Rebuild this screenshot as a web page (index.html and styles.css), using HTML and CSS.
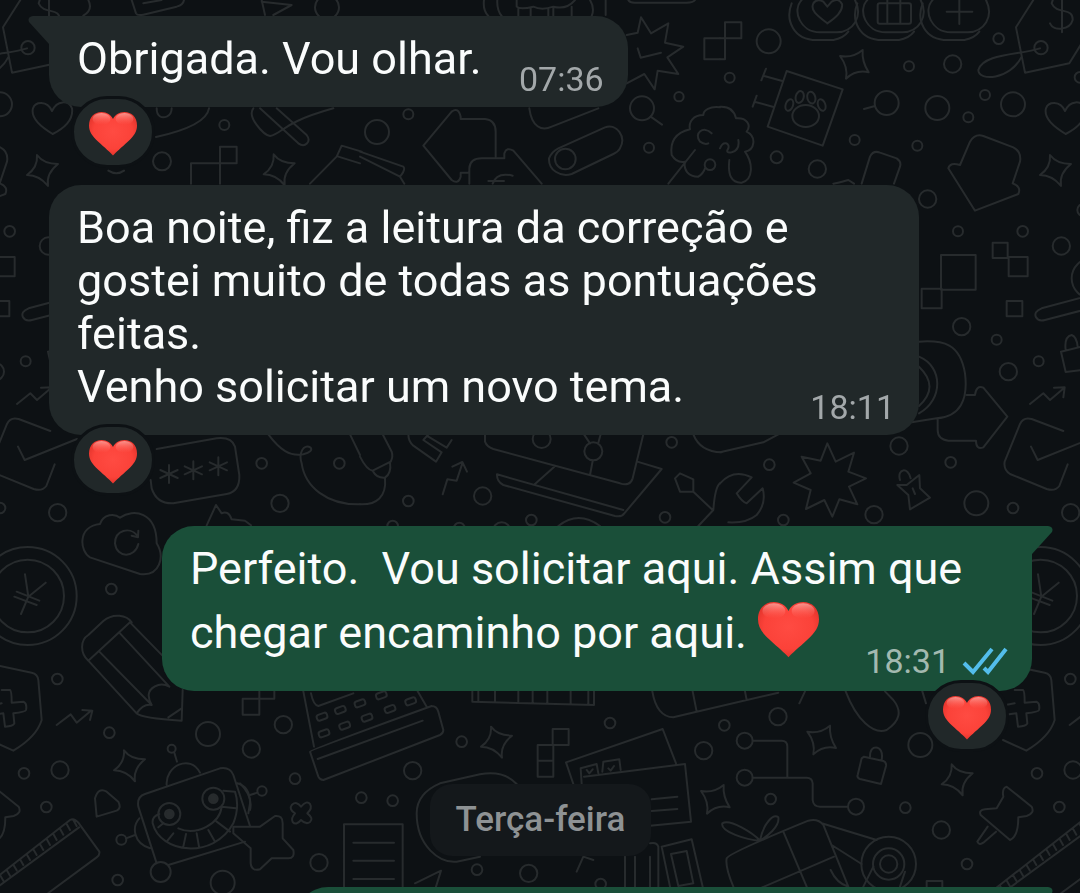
FILE: index.html
```html
<!DOCTYPE html>
<html lang="pt-BR">
<head>
<meta charset="utf-8">
<meta name="viewport" content="width=device-width, initial-scale=1">
<title>Conversa</title>
<link rel="stylesheet" href="styles.css">
</head>
<body>
<svg class="defs" aria-hidden="true">
  <defs>
    <radialGradient id="heart-fill" cx="50%" cy="45%" r="62%">
      <stop offset="0" stop-color="#ff4b42"/>
      <stop offset="0.65" stop-color="#fb4239"/>
      <stop offset="1" stop-color="#dc2f27"/>
    </radialGradient>
    <linearGradient id="heart-shine" x1="0" y1="0" x2="0" y2="1">
      <stop offset="0" stop-color="#ffd0cb" stop-opacity="0.6"/>
      <stop offset="1" stop-color="#ff6a60" stop-opacity="0"/>
    </linearGradient>
    <symbol id="heart" viewBox="0 0 48 44">
      <path fill="url(#heart-fill)" d="M24 43.500C21 40 16 36 9 29.500C3 24 0 19.500 0 13.500C0 5 5.500 0 12.500 0C18 0 22 3 24 7C26 3 30 0 35.500 0C42.500 0 48 5 48 13.500C48 19.500 45 24 39 29.500C32 36 27 40 24 43.500Z"/>
      <ellipse fill="url(#heart-shine)" cx="12.500" cy="7" rx="9" ry="6"/>
      <ellipse fill="url(#heart-shine)" cx="35.500" cy="7" rx="9" ry="6"/>
    </symbol>
    <symbol id="tail" viewBox="0 0 21 28">
      <path d="M0 0H16Q22 1 20 6L0 28Z" fill="currentColor"/>
    </symbol>
    <path id="spark" d="M-15 -45Q5 -18 48 -18Q12 10 18 48Q-8 15 -45 15Q-12 -8 -15 -45Z"/>
    <path id="spark-b" d="M25 -43Q22 -8 43 24Q5 15 -25 43Q-18 8 -43 -25Q-5 -18 25 -43Z"/>
    <path id="aster" d="M0 -27V27M-26 -12L26 12M-26 12L26 -12"/>
    <rect id="key" x="-16" y="-9" width="32" height="18" rx="7" transform="rotate(-20)"/>
    <g id="coin"><path d="M245 0C215 30 240 97 300 97H350C400 95 430 50 405 0M215 10C195 60 220 120 290 120H340Q370 115 385 95"/></g>
  </defs>
</svg>

<svg class="wallpaper" viewBox="0 0 1080 893" preserveAspectRatio="xMinYMin slice" aria-hidden="true">
  <g id="tile">
    <g transform="scale(.33333)">
      <circle cx="673" cy="375" r="15"/><circle cx="486" cy="484" r="27"/><circle cx="981" cy="22" r="36"/>
      <use href="#spark" x="836" y="508"/>
      <path d="M468 411C540 395 620 370 627 325M470 325C470 350 485 355 500 350C512 345 515 335 515 325M760 325C740 350 790 405 810 408C850 400 840 370 1000 325M780 325L895 430C915 445 935 425 920 405L830 325M573 551V490H660V440H710V490H660V551M930 551L1010 470L1025 437L1085 455M1015 470L1080 490M395 0L408 40Q412 48 430 44L530 20Q550 14 552 0M430 10L485 0M785 0L795 45M785 5L875 15L820 45M265 0Q280 30 250 47M325 512Q350 528 372 512"/>
    </g>
    <g transform="translate(360 0) scale(.33333)">
      <circle cx="145" cy="343" r="15"/><circle cx="51" cy="396" r="36"/><circle cx="616" cy="477" r="31"/><circle cx="846" cy="325" r="36"/><circle cx="957" cy="290" r="14"/><circle cx="867" cy="443" r="15"/><circle cx="1050" cy="494" r="16"/>
      <path d="M872 350L906 374M372 0Q368 30 385 48M412 0Q410 30 425 48M470 0V20Q480 30 520 20Q545 32 580 20Q620 30 645 0M475 25V48M512 25V48M565 25V48M580 25V48M635 20V48M690 0Q705 25 695 48M737 0V45M805 0Q810 10 830 8H980Q1000 8 1005 0"/>
      <path d="M800 105L833 98L843 52L873 100L925 70L915 128L970 140L922 172L955 222L893 212L884 268L853 222L800 250M833 145L842 173L903 158M1080 115H1033V178H1080"/>
      <path d="M508 325C515 380 545 395 575 380L715 325M595 445L735 382C770 370 800 410 780 445Q775 455 760 462L635 522C600 532 565 510 567 475Q575 455 595 445ZM325 518H302V530Q295 555 275 540L190 437L275 335Q295 320 302 350V357H375Q407 360 407 395V470M328 551V505Q330 475 365 475H433V460Q440 440 460 452L545 551M385 543H432M398 551Q410 515 458 527M0 470L120 530L133 551M0 455L130 500Q138 508 120 530"/>
      <path d="M1080 322C1050 318 1030 330 1030 345C1000 345 985 365 990 388C940 400 930 430 935 465Q950 490 975 485C970 510 985 530 1015 530Q1030 520 1035 505M1055 400C1030 375 1000 400 1020 425Q1035 435 1045 430M925 551L1005 450"/>
    </g>
    <g transform="translate(720 0) scale(.33333)">
      <circle cx="146" cy="124" r="36"/><circle cx="29" cy="233" r="15"/><circle cx="567" cy="199" r="15"/><circle cx="698" cy="192" r="26"/><circle cx="836" cy="116" r="16"/><circle cx="963" cy="143" r="20"/><circle cx="500" cy="309" r="36"/><circle cx="652" cy="324" r="36"/><circle cx="745" cy="352" r="15"/><circle cx="795" cy="285" r="15"/><circle cx="879" cy="313" r="36"/><circle cx="404" cy="420" r="15"/><circle cx="592" cy="437" r="15"/><circle cx="170" cy="472" r="18"/><circle cx="292" cy="507" r="26"/><circle cx="623" cy="597" r="26"/><circle cx="1080" cy="232" r="16"/><circle cx="1090" cy="630" r="18"/>
      <use href="#spark-b" x="403" y="193"/><use href="#spark" x="1005" y="510"/>
      <use href="#coin"/><use href="#coin" x="197"/><use href="#coin" x="393"/>
      <rect x="473" y="10" width="100" height="61" rx="6"/>
      <path d="M322 70C290 45 270 30 280 10Q290 -5 310 5L322 20L335 5Q355 -8 366 12C370 35 345 55 322 70M502 0V70M541 0V70M718 0V72M680 35H757M0 115H15V67H64V115H15V178H0"/>
      <path d="M200 213L368 268L308 437L143 380ZM187 243L130 227M138 206L124 241M158 320L103 305M110 287L98 320"/>
      <ellipse cx="257" cy="348" rx="40" ry="33"/>
      <ellipse cx="208" cy="315" rx="11" ry="18" transform="rotate(20 208 315)"/><ellipse cx="239" cy="291" rx="12" ry="18" transform="rotate(15 239 291)"/><ellipse cx="274" cy="293" rx="12" ry="18" transform="rotate(-15 274 293)"/><ellipse cx="305" cy="315" rx="11" ry="18" transform="rotate(-20 305 315)"/>
      <path d="M432 327L465 318M940 0L888 82L915 218L1048 190L1085 130M960 145C900 165 790 160 775 210C775 245 870 240 905 170M1026 0V97M990 70C1000 95 1050 90 1058 60C1060 20 1010 45 995 10L1000 -5M1037 402C1000 380 970 355 978 325C985 305 1020 300 1035 333C1050 300 1085 300 1095 325C1100 360 1070 385 1037 402"/>
      <path d="M765 632L685 505Q690 485 720 495L750 425Q765 400 790 408L880 442Q905 455 900 485L878 550Q905 560 895 582ZM425 551L450 470Q460 450 480 458L530 475Q545 485 540 500L522 551M0 320Q40 318 48 355C80 352 95 375 80 395C110 410 105 450 75 455C100 490 100 540 65 548Q20 550 28 480M0 445C10 420 30 430 25 445Q15 460 35 457Q60 450 55 420M340 551Q370 545 385 540L402 551"/>
    </g>
    <g transform="translate(900 200) scale(.33333)">
      <circle cx="174" cy="94" r="15"/><circle cx="368" cy="94" r="16"/><circle cx="484" cy="138" r="26"/><circle cx="185" cy="380" r="26"/><circle cx="290" cy="419" r="15"/><circle cx="325" cy="515" r="26"/><circle cx="416" cy="484" r="15"/><circle cx="152" cy="787" r="16"/><circle cx="229" cy="910" r="36"/><circle cx="339" cy="924" r="16"/><circle cx="512" cy="938" r="26"/><circle cx="-3" cy="738" r="26"/><circle cx="575" cy="235" r="60"/>
      <path d="M123 165H227V269H123ZM65 266H125V325H65ZM278 128H323V174H278ZM326 171H383V229H326ZM320 303H367V349H320ZM600 278L425 325Q400 335 408 352Q415 365 435 360L600 317M483 455L545 440V510L497 516ZM497 450Q492 410 515 405Q530 410 533 440M390 612L430 580L450 600L493 563M462 563L494 562L490 592"/>
      <path d="M490 693L395 657Q370 650 360 672L314 785Q310 810 330 822L440 867Q465 875 478 858L503 793M393 740L413 780L570 717M200 585H225Q228 555 250 563L322 650L250 742Q228 750 228 722H145Q113 718 113 690V655M57 425C130 420 180 430 195 520C205 600 180 650 110 655L35 667M57 470C130 500 130 600 57 640M57 500Q120 560 57 618"/>
    </g>
    <g transform="translate(0 400) scale(.33333)">
      <circle cx="785" cy="190" r="16"/><circle cx="1018" cy="190" r="16"/><circle cx="840" cy="310" r="26"/><circle cx="334" cy="567" r="16"/>
      <path d="M470 147L650 115Q695 110 705 140L718 225Q720 275 680 282L520 310Q470 312 455 265L452 240"/>
      <use href="#aster" x="507" y="222"/><use href="#aster" x="580" y="211"/><use href="#aster" x="655" y="199"/>
      <path d="M270 472C240 455 230 380 300 372C310 340 345 340 360 353C400 325 470 335 470 430C495 470 480 530 420 522ZM410 405C390 380 345 390 345 430C350 475 405 475 415 432M395 407L414 412L415 392M620 376L648 315L665 340Q685 330 695 358L735 362L753 376M805 103C840 150 870 170 910 163Q940 155 932 143C910 130 895 160 905 190C915 260 980 315 1080 313M1050 103L1080 165"/>
    </g>
    <g transform="translate(360 420) scale(.33333)">
      <circle cx="145" cy="243" r="16"/><circle cx="368" cy="228" r="26"/><circle cx="514" cy="300" r="16"/><circle cx="935" cy="67" r="16"/><circle cx="915" cy="292" r="16"/><circle cx="700" cy="94" r="27"/><circle cx="545" cy="57" r="27"/><circle cx="98" cy="318" r="16"/><circle cx="298" cy="324" r="16"/><circle cx="425" cy="334" r="27"/>
      <path d="M0 253C50 255 80 230 75 175M0 110Q20 150 38 152L92 125Q100 110 95 95L68 43M38 152Q50 175 75 173Q95 160 90 127M145 43Q145 65 160 77L228 125L245 97L190 60L205 43M205 50L260 83L275 60M248 223L262 178L290 182L307 130M277 140L307 126L321 155"/>
      <path d="M375 43V65Q380 80 400 87L780 190Q810 200 818 175L850 43M832 125L905 147L793 280Q785 292 765 288L430 195Q410 185 411 163L790 270M525 192L583 140M690 165L698 123M672 43L690 70M722 43L715 68M1000 43Q1020 95 1085 97M945 175L960 160L1000 178V215H960ZM1000 215L1058 270M1015 318L1060 270Q1065 200 1080 190M595 318Q655 270 720 318"/>
    </g>
    <g transform="translate(720 420) scale(.33333)">
      <circle cx="148" cy="134" r="16"/><circle cx="190" cy="300" r="16"/><circle cx="462" cy="284" r="26"/>
      <path d="M0 190Q40 145 95 172L50 220Q65 245 80 250L128 205Q140 250 110 285Q80 310 25 307M0 97L130 67L175 43M322 70L347 125L402 98L385 155L438 175L387 200L412 253L358 238L337 290L313 240L258 267L272 210L221 188L272 160L245 110L302 122ZM532 195L560 195L598 165L600 205L630 233L570 268L565 225ZM540 180C530 145 565 140 572 175M578 205L585 222"/>
    </g>
    <g transform="translate(1013 540) scale(.33333)">
      <circle cx="83" cy="168" r="147"/><circle cx="83" cy="168" r="109"/><circle cx="172" cy="417" r="16"/><circle cx="72" cy="700" r="16"/><circle cx="180" cy="690" r="26"/><circle cx="139" cy="801" r="16"/>
      <path d="M75 103L85 170L137 128M85 170L63 222M50 155L118 182M43 170L110 195M0 378L95 398Q113 402 115 420L125 540Q110 590 40 632L-30 600M0 378L-40 385M5 450H30Q35 452 35 488L70 485Q82 490 78 510Q76 516 40 520L43 550Q40 558 15 560L10 520L-22 524M-22 495L5 490ZM170 555L212 523L230 548L273 512M247 510L277 512L270 540"/>
      <path d="M-125 1102L210 840Q222 833 235 848L298 935Q300 945 290 952L145 1059M-90 1102L237 862M220 840L230 858M200 852L210 870M180 866L190 884M160 882L170 900M140 897L150 915M120 913L130 930M100 928L110 945M80 943L90 960M60 958L70 975M40 974L50 991M20 990L30 1007M0 1005L10 1022M-20 1020L-10 1037M-40 1036L-30 1053"/>
    </g>
    <g transform="translate(0 540) scale(.33333)">
      <circle cx="328" cy="578" r="16"/><circle cx="624" cy="582" r="36"/><circle cx="754" cy="627" r="26"/><circle cx="353" cy="1020" r="16"/><circle cx="668" cy="1028" r="36"/><circle cx="515" cy="626" r="12"/><circle cx="482" cy="996" r="30"/><circle cx="508" cy="822" r="33"/><circle cx="640" cy="776" r="33"/><circle cx="364" cy="899" r="15"/>
      <circle class="wallpaper__dot" cx="508" cy="822" r="13"/><circle class="wallpaper__dot" cx="640" cy="776" r="13"/>
      <use href="#spark" x="387" y="676"/>
      <path d="M265 362L410 520Q425 535 545 542L548 450M265 362L390 247L510 370M265 362C240 340 240 300 265 285L310 243C340 218 380 225 395 247M298 335L455 495M358 278L508 440M410 520Q430 490 455 495Q430 450 475 435Q490 430 508 440M505 532L545 505M290 830L285 775Q295 740 320 755L355 785Q365 805 350 812Z"/>
      <path d="M523 638L531 665M500 735C495 680 570 640 600 698M470 970L415 800Q410 770 435 762L660 685Q690 680 700 705L750 858M505 975L735 905M458 850C480 940 640 960 700 850Q720 800 705 755L670 752M535 865C590 890 660 850 665 800M458 850Q455 830 478 822M500 905L520 880M550 920L558 882M597 920L590 880M645 905L625 870M690 875L650 845M708 805L665 800M475 862L490 850M418 835C395 860 400 910 450 925M405 885L378 895M712 730Q750 740 750 790L745 820"/>
    </g>
    <g transform="translate(240 680) scale(.33333)">
      <circle cx="130" cy="134" r="26"/><circle cx="165" cy="296" r="16"/><circle cx="518" cy="272" r="26"/><circle cx="364" cy="353" r="16"/><circle cx="458" cy="362" r="16"/><circle cx="237" cy="548" r="26"/><circle cx="711" cy="569" r="16"/><circle cx="866" cy="580" r="26"/><circle cx="665" cy="185" r="16"/><circle cx="66" cy="333" r="14"/>
      <use href="#spark" x="768" y="185"/>
      <use href="#key" x="246" y="110"/><use href="#key" x="301" y="90"/><use href="#key" x="360" y="70"/><use href="#key" x="424" y="46"/><use href="#key" x="252" y="160"/><use href="#key" x="314" y="137"/><use href="#key" x="381" y="113"/><use href="#key" x="450" y="87"/><use href="#key" x="512" y="64"/>
      <path d="M52 338L30 345M0 310Q40 350 30 390M8 56H58V104H8ZM58 34V56H103V34M-20 440H60L105 408Q128 405 128 430V475L160 510Q165 535 145 535H95L60 568Q35 575 32 550V505L-20 460Z"/>
      <path d="M183 380Q200 360 210 372Q218 385 202 400Q222 415 210 426Q198 435 183 420Q168 438 158 426Q152 415 165 400Q145 388 156 374Q170 362 183 380Z"/>
      <path d="M190 34L222 200M575 78Q590 78 595 95L610 150Q610 160 600 165L250 300Q240 300 235 290L210 215Q210 210 575 78M233 237L548 122M533 34L560 80M213 40Q220 75 235 78L340 40M697 34V65L1062 75V34M715 34V65M765 34V66M835 34V68M878 34V69M922 34V70M992 34V72M1045 34V73M938 147H986V195H938ZM893 195H940V290H893ZM893 242H940M312 620V433H488V620M340 488H462M340 542H462M340 597H462M830 312Q790 270 720 283L600 310Q530 340 530 400C530 500 600 550 650 545L720 530M588 620L603 572L525 610"/>
    </g>
    <g transform="translate(560 680) scale(.33333)">
      <circle cx="150" cy="129" r="16"/><circle cx="431" cy="212" r="26"/><circle cx="493" cy="136" r="16"/><circle cx="654" cy="110" r="26"/><circle cx="554" cy="182" r="24"/><circle cx="554" cy="293" r="24"/><circle cx="888" cy="380" r="24"/><circle cx="632" cy="357" r="16"/><circle cx="1036" cy="383" r="16"/><circle cx="1144" cy="450" r="26"/><circle cx="1221" cy="552" r="16"/><circle cx="1081" cy="195" r="36"/><circle cx="986" cy="552" r="82"/><circle cx="986" cy="552" r="47"/><circle cx="986" cy="552" r="26"/><circle cx="122" cy="612" r="16"/>
      <use href="#spark-b" x="785" y="180"/><use href="#spark-b" x="466" y="358"/><use href="#spark" x="1190" y="298"/>
      <path d="M40 312L18 247L308 147L348 250M65 312L62 265L110 252L115 280M127 275L130 245L178 238L182 270M80 270L88 280L98 268M145 265L152 272L162 258M72 290L375 252L393 425L270 437M275 358L352 350M275 393L352 387M578 182H665Q682 182 682 200V290M578 293H740Q757 293 758 310V360Q760 380 780 380H864"/>
      <path d="M912 230L970 243Q980 247 978 258L963 312L900 297Q890 293 893 285L905 235ZM930 230Q930 200 952 203Q970 210 965 240M857 34C890 120 940 165 980 150Q1040 110 1000 60L975 34M277 34Q290 110 340 112L410 95L655 38M398 34L410 95M555 34L560 60M735 34L718 70M1087 34L1098 70M1340 320L1415 380Q1425 400 1400 408L1375 412Q1375 470 1350 480L1262 405Q1255 390 1275 388L1310 385L1330 350Q1325 325 1340 320ZM1283 440L1252 485Q1258 497 1270 488L1308 455"/>
      <path d="M520 620Q495 560 500 535Q505 520 745 422Q775 415 790 435L865 620M670 455L740 620M600 625L822 530M600 482C560 480 480 455 487 430C510 415 580 460 600 482M600 482C610 430 640 400 655 412C660 440 620 470 600 482M785 430L950 480M815 495L905 552M910 620L940 560M1020 620L1035 575M812 570Q830 610 865 620M195 620V530M225 620V530M270 620V530M295 620V500Q290 485 270 490M330 620L305 500L395 478L428 620M333 522L380 513L400 610L355 618ZM50 575L70 530L100 540M1100 620V603H1147V620"/>
    </g>
  </g>
  <use href="#tile" x="-1013"/>
</svg>

<main class="chat">
  <article class="message message--in">
    <div class="bubble bubble--first">
      <svg class="bubble__tail" aria-hidden="true"><use href="#tail"/></svg>
      <p class="bubble__text bubble__text--inline">Obrigada. Vou olhar.</p>
      <div class="bubble__meta"><time>07:36</time></div>
    </div>
    <button class="reaction" type="button" aria-label="Reação: coração"><svg class="reaction__heart"><use href="#heart"/></svg></button>
  </article>

  <article class="message message--in">
    <div class="bubble">
      <p class="bubble__text">Boa noite, fiz a leitura da correção e gostei muito de todas as pontuações feitas.<br>Venho solicitar um novo tema.</p>
      <div class="bubble__meta"><time>18:11</time></div>
    </div>
    <button class="reaction" type="button" aria-label="Reação: coração"><svg class="reaction__heart"><use href="#heart"/></svg></button>
  </article>

  <article class="message message--out">
    <div class="bubble bubble--first">
      <svg class="bubble__tail" aria-hidden="true"><use href="#tail"/></svg>
      <p class="bubble__text bubble__text--emoji">Perfeito.  Vou solicitar aqui. Assim que chegar encaminho por aqui. <svg class="emoji" role="img" aria-label="coração"><use href="#heart"/></svg></p>
      <div class="bubble__meta"><time>18:31</time>
        <svg class="ticks" viewBox="0 0 46 30" role="img" aria-label="Lida"><path d="M2 17L11 26L30 3M22 22L26 26L44 3"/></svg>
      </div>
    </div>
    <button class="reaction" type="button" aria-label="Reação: coração"><svg class="reaction__heart"><use href="#heart"/></svg></button>
  </article>

  <h2 class="day">Terça-feira</h2>

  <article class="message message--out message--next">
    <div class="bubble bubble--first bubble--pending">
      <svg class="bubble__tail" aria-hidden="true"><use href="#tail"/></svg>
    </div>
  </article>
</main>
</body>
</html>
```
FILE: styles.css
```css
* {
  box-sizing: border-box;
}

body {
  margin: 0;
  height: 100vh;
  overflow: hidden;
  background: #0d1114;
  color: #fafcfc;
  font-family: Roboto, "Noto Sans", sans-serif;
}

.defs {
  position: absolute;
  width: 0;
  height: 0;
}

.wallpaper {
  position: fixed;
  inset: 0;
  width: 100%;
  height: 100%;
  fill: none;
  stroke: #272b2d;
  stroke-width: 6;
  stroke-linecap: round;
  stroke-linejoin: round;
}

.wallpaper__dot {
  fill: #272b2d;
}

.chat {
  position: relative;
  display: flex;
  flex-direction: column;
  height: 100vh;
  overflow: hidden;
  padding: 16px 48px 0 49px;
}

.message {
  display: flex;
  flex: none;
  flex-direction: column;
  align-items: flex-start;
  margin-bottom: 17px;
}

.message--out {
  align-items: flex-end;
  margin-top: 13px;
}

.bubble {
  position: relative;
  display: grid;
  max-width: 870px;
  padding: 16px 24px 9px 28px;
  border-radius: 32px;
  background: #212829;
  color: #212829;
}

.message--out .bubble {
  padding-top: 11px;
  padding-bottom: 11px;
  background: #1a4f39;
  color: #1a4f39;
}

.message--in .bubble--first {
  border-top-left-radius: 0;
}

.message--out .bubble--first {
  border-top-right-radius: 0;
}

.bubble__tail {
  position: absolute;
  top: 0;
  left: 100%;
  width: 21px;
  height: 28px;
}

.message--in .bubble__tail {
  right: 100%;
  left: auto;
  transform: scaleX(-1);
}

.bubble__text,
.bubble__meta {
  grid-area: 1 / 1;
}

.bubble__text {
  margin: 0;
  padding-bottom: 13px;
  color: #fafcfc;
  font-size: 45px;
  line-height: 53px;
  white-space: pre-wrap;
}

.bubble__text--inline {
  padding-right: 122px;
}

.bubble__text--emoji {
  padding-bottom: 15px;
  line-height: 64px;
}

.emoji {
  width: 61px;
  height: 56px;
  vertical-align: -10px;
}

.bubble__meta {
  display: flex;
  align-items: center;
  align-self: end;
  justify-self: end;
  gap: 12px;
  color: #a3a8aa;
  font-size: 34px;
  line-height: 38px;
}

.message--out .bubble__meta {
  color: #a3b9b0;
}

.ticks {
  width: 46px;
  height: 30px;
  fill: none;
  stroke: #53bdeb;
  stroke-width: 4;
}

.reaction {
  position: relative;
  display: grid;
  place-items: center;
  width: 84px;
  height: 72px;
  margin: -11px 22px 0;
  padding: 4px 0 0;
  border: 3px solid #0d1114;
  border-radius: 36px;
  background: #212829;
}

.message--out .reaction {
  margin-right: 23px;
}

.reaction__heart {
  width: 48px;
  height: 44px;
}

.day {
  flex: none;
  align-self: center;
  margin: 15px 0 18px;
  padding: 16px 26px;
  border-radius: 22px;
  background: #14181b;
  color: #8e9294;
  font-size: 35px;
  font-weight: 500;
  line-height: 40px;
}

.message--next .bubble {
  width: 736px;
}

.bubble--pending {
  min-height: 92px;
}
```
